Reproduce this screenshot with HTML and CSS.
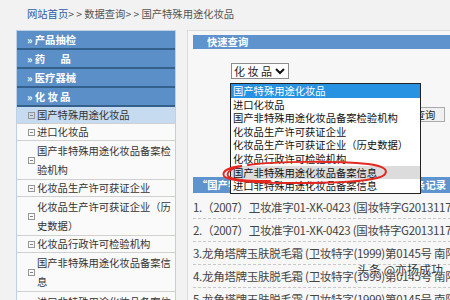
FILE: index.html
```html
<!DOCTYPE html>
<html>
  <head>
    <meta charset="utf-8">
    <title>国产特殊用途化妆品</title>
    <link rel="stylesheet" href="styles.css">
  </head>
  <body>
    <div class="crumb"><a href="#">网站首页</a>&gt; &gt; 数据查询&gt; &gt; 国产特殊用途化妆品</div>

    <div class="main">
      <div class="side">
        <ul class="cats">
          <li>» 产品抽检</li>
          <li>» 药&emsp;&ensp;品</li>
          <li>» 医疗器械</li>
          <li>» 化 妆 品</li>
        </ul>
        <ul class="subs">
          <li class="on one"><i class="ico"></i><span>国产特殊用途化妆品</span></li>
          <li class="one"><i class="ico"></i><span>进口化妆品</span></li>
          <li><i class="ico"></i><span>国产非特殊用途化妆品备案检验机构</span></li>
          <li class="one"><i class="ico"></i><span>化妆品生产许可获证企业</span></li>
          <li><i class="ico"></i><span>化妆品生产许可获证企业（历史数据）</span></li>
          <li class="one"><i class="ico"></i><span>化妆品行政许可检验机构</span></li>
          <li><i class="ico"></i><span>国产非特殊用途化妆品备案信息</span></li>
          <li><i class="ico"></i><span>进口非特殊用途化妆品备案信息</span></li>
        </ul>
      </div>

      <div class="panel">
        <div class="head">快速查询</div>
        <div class="query">
          <div class="sel"><span>化妆品</span><svg width="10" height="7" viewBox="0 0 10 7"><polyline points="1,1 5,5 9,1" fill="none" stroke="#111" stroke-width="2"/></svg></div>
          <div class="row2">
            <input class="kw" type="text">
            <button class="btn">查询</button>
          </div>

          <ul class="drop">
            <li class="pick">国产特殊用途化妆品</li>
            <li>进口化妆品</li>
            <li>国产非特殊用途化妆品备案检验机构</li>
            <li>化妆品生产许可获证企业</li>
            <li>化妆品生产许可获证企业（历史数据）</li>
            <li>化妆品行政许可检验机构</li>
            <li class="hover">国产非特殊用途化妆品备案信息</li>
            <li>进口非特殊用途化妆品备案信息</li>
          </ul>
          <!-- red pen mark -->
          <svg class="ring" width="172" height="28" viewBox="0 0 172 28">
            <path d="M30,6 C60,2 120,2 150,5 C166,7 170,11 167,15 C163,21 130,24 85,24 C45,24 10,23 6,17 C3,12 12,8 24,7 C14,9 8,13 10,17 C14,22 40,22 52,22" fill="none" stroke="#e2281f" stroke-width="2" stroke-linecap="round"/>
          </svg>
        </div>

        <div class="bar"><span>“国产特殊用途化妆品”查询结果</span><span>共14328条记录</span></div>
        <ul class="list">
          <li>1.（2007）卫妆准字01-XK-0423 (国妆特字G20131179)</li>
          <li>2.（2007）卫妆准字01-XK-0423 (国妆特字G20131179)</li>
          <li>3.龙角塔牌玉肤脱毛霜 (卫妆特字(1999)第0145号 南阳市)</li>
          <li>4.龙角塔牌玉肤脱毛霜 (卫妆特字(1999)第0145号 南阳市)</li>
          <li>5.龙角塔牌玉肤脱毛霜 (卫妆特字(1999)第0145号 南阳市)</li>
        </ul>
      </div>
    </div>

    <div class="mark">头条 @亦扬成功</div>
  </body>
</html>
```

FILE: styles.css
```css
:root {
  --blue: rgb(91,143,200);
  --blueline: rgb(52,96,140);
  --barblue: rgb(94,147,205);
  --pagebg: rgb(242,242,242);
  --text: rgb(51,51,51);
}

* {
  box-sizing: border-box;
}

body {
  margin: 0;
  background: var(--pagebg);
  font-family: "Noto Sans CJK SC", "Noto Sans", sans-serif;
  font-size: 10.3px;
  color: var(--text);
  overflow: hidden;
  width: 450px;
  height: 300px;
}

ul {
  list-style: none;
  margin: 0;
  padding: 0;
}

.crumb {
  height: 30px;
  line-height: 28px;
  padding-left: 27px;
  color: rgb(85,85,85);
  white-space: nowrap;
}

.crumb a {
  color: rgb(44,94,168);
  text-decoration: none;
}

.main {
  display: flex;
  gap: 11px;
  padding-left: 16px;
}

/* left menu */
.side {
  width: 160px;
  flex-shrink: 0;
  border: 1px solid rgb(190,208,228);
  background: rgb(250,250,250);
}

.cats li {
  height: 19px;
  line-height: 17px;
  padding-left: 10px;
  background: var(--blue);
  border-bottom: 2px solid var(--blueline);
  color: #fff;
  font-weight: bold;
}

.subs li {
  display: flex;
  align-items: center;
  border-bottom: 1px solid rgb(208,208,208);
  line-height: 19px;
}

.subs li.one {
  line-height: 16px;
}

.subs li.on {
  background: rgb(198,218,240);
}

.subs span {
  width: 137px;
}

.ico {
  width: 7px;
  height: 7px;
  margin: 0 2px 0 11px;
  border: 1px solid rgb(150,150,150);
  flex-shrink: 0;
  display: flex;
  align-items: center;
  justify-content: center;
}

.ico::after {
  content: "";
  width: 3px;
  height: 1px;
  background: rgb(130,130,130);
}

/* right panel */
.panel {
  width: 300px;
  flex-shrink: 0;
  background: rgb(247,247,247);
  border: 1px solid rgb(220,220,220);
  padding: 4px 0 0 5px;
  height: 290px;
}

.head {
  height: 14px;
  line-height: 14px;
  padding-left: 14px;
  background: var(--barblue);
  color: #fff;
  font-weight: bold;
}

.query {
  position: relative;
  padding: 14px 0 55px 38px;
}

.sel {
  width: 58px;
  height: 16px;
  border: 1px solid rgb(140,140,140);
  background: #fff;
  display: flex;
  align-items: center;
  justify-content: space-between;
  padding: 0 3px 0 2px;
  font-size: 11px;
  letter-spacing: 2.5px;
  color: #222;
  line-height: 14px;
  white-space: nowrap;
}

.row2 {
  display: flex;
  gap: 8px;
  margin-top: 28px;
}

.kw {
  width: 166px;
  height: 15px;
  border: 1px solid rgb(170,170,170);
  padding: 0;
}

.btn {
  width: 40px;
  height: 15px;
  padding: 0;
  border: 1px solid rgb(170,170,170);
  background: rgb(240,240,240);
  font-family: inherit;
  font-size: 10.3px;
  line-height: 13px;
  color: #222;
}

.drop {
  position: absolute;
  left: 37px;
  top: 34px;
  width: 191px;
  border: 1px solid rgb(34,34,34);
  background: #fff;
}

.drop li {
  height: 13.6px;
  line-height: 13.6px;
  padding-left: 2px;
  color: #111;
  white-space: nowrap;
}

.drop li.pick {
  background: rgb(40,146,226);
  color: #fff;
}

.drop li.hover {
  background: rgb(220,220,220);
}

.ring {
  position: absolute;
  left: 25px;
  top: 110px;
}

.bar {
  height: 16px;
  line-height: 16px;
  display: flex;
  justify-content: space-between;
  padding: 0 40px 0 4px;
  background: var(--barblue);
  color: #fff;
  font-weight: bold;
}

.list {
  margin-top: 3px;
}

.list li {
  height: 23px;
  line-height: 22px;
  border-bottom: 1px dashed rgb(200,200,200);
  font-size: 11.5px;
  letter-spacing: -0.3px;
  color: rgb(68,68,68);
  white-space: nowrap;
  overflow: hidden;
}

.mark {
  position: absolute;
  left: 357px;
  top: 261px;
  font-size: 12px;
  color: rgb(50,50,50);
  text-shadow: 0 0 2px #fff, 0 0 2px #fff;
}
```
